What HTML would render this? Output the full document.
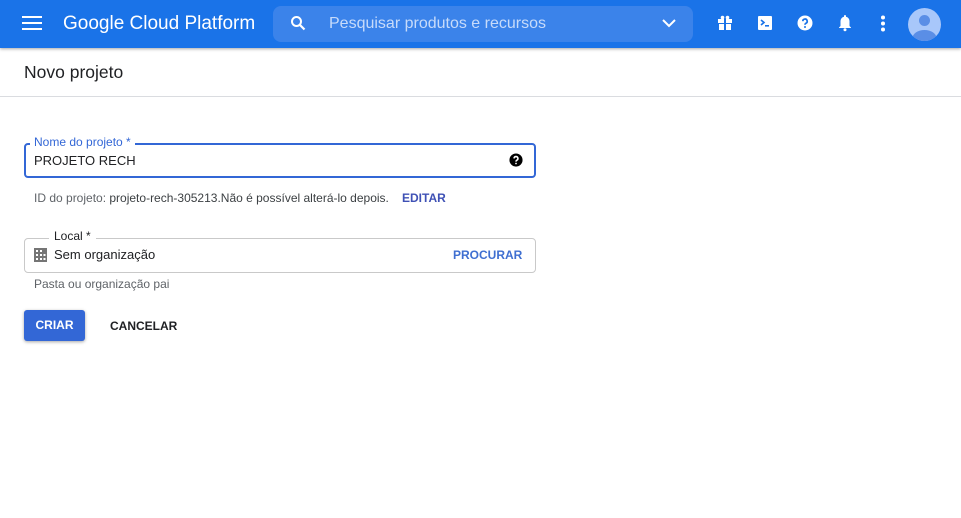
<!DOCTYPE html>
<html><head><meta charset="utf-8"><style>
*{box-sizing:border-box;margin:0;padding:0}
body{width:961px;height:518px;overflow:hidden;background:#fff;font-family:"Liberation Sans",Arial,sans-serif;position:relative}
.top{position:absolute;left:0;top:0;width:961px;height:48px;background:#1a73e8;box-shadow:0 1px 3px rgba(0,0,0,.35)}
.abs{position:absolute}
</style></head><body>
<div class="top">
  <svg class="abs" style="left:22px;top:15px" width="20" height="16"><rect y="1" width="20" height="2" fill="#fff"/><rect y="7" width="20" height="2" fill="#fff"/><rect y="13" width="20" height="2" fill="#fff"/></svg>
  <div class="abs" style="left:63px;top:13px;color:#fff;font-size:19px">Google Cloud Platform</div>
  <div class="abs" style="left:273px;top:6px;width:420px;height:36px;background:#3b83ea;border-radius:8px"></div>
  <svg class="abs" style="left:290px;top:15px" width="16" height="16" viewBox="0 0 16 16"><circle cx="6.5" cy="6.5" r="4.5" stroke="#fff" stroke-width="2" fill="none"/><path d="M10 10l4.5 4.5" stroke="#fff" stroke-width="2.2"/></svg>
  <div class="abs" style="left:329px;top:15px;color:#c7dbfa;font-size:16px">Pesquisar produtos e recursos</div>
  <svg class="abs" style="left:661px;top:17px" width="16" height="12"><path d="M2 3l6 6 6-6" stroke="#fff" stroke-width="2" fill="none"/></svg>
  <svg class="abs" style="left:717px;top:15px" width="16" height="16" viewBox="0 0 16 16" fill="#fff"><rect x="1" y="4" width="14" height="4"/><rect x="2" y="9" width="12" height="6"/><rect x="7" y="4" width="2" height="11" fill="#1a73e8"/><circle cx="5.5" cy="2.5" r="1.8"/><circle cx="10.5" cy="2.5" r="1.8"/></svg>
  <svg class="abs" style="left:757px;top:15px" width="16" height="16" viewBox="0 0 16 16"><rect x="1" y="1" width="14" height="14" rx="1" fill="#fff"/><path d="M4 5l3 2.5L4 10" stroke="#1a73e8" stroke-width="1.6" fill="none"/><rect x="8" y="10" width="4" height="1.6" fill="#1a73e8"/></svg>
  <svg class="abs" style="left:797px;top:15px" width="16" height="16" viewBox="0 0 16 16"><circle cx="8" cy="8" r="7.5" fill="#fff"/><path d="M5.8 6.2a2.2 2.2 0 1 1 3.2 2c-.8.4-1 .9-1 1.6" stroke="#1a73e8" stroke-width="1.7" fill="none"/><circle cx="8" cy="12" r="1" fill="#1a73e8"/></svg>
  <svg class="abs" style="left:838px;top:14px" width="14" height="18" viewBox="0 0 14 18" fill="#fff"><path d="M7 1a1 1 0 0 1 1 1v.7A4.5 4.5 0 0 1 11.5 7v5l1.5 1.5V14H1v-.5L2.5 12V7A4.5 4.5 0 0 1 6 2.7V2a1 1 0 0 1 1-1z"/><circle cx="7" cy="15.8" r="1.5"/></svg>
  <svg class="abs" style="left:880px;top:15px" width="6" height="18" fill="#fff"><circle cx="3" cy="2.5" r="2"/><circle cx="3" cy="8.5" r="2"/><circle cx="3" cy="14.5" r="2"/></svg>
  <svg class="abs" style="left:908px;top:8px" width="33" height="33" viewBox="0 0 33 33"><defs><clipPath id="c"><circle cx="16.5" cy="16.5" r="16.5"/></clipPath></defs><circle cx="16.5" cy="16.5" r="16.5" fill="#a8c7fa"/><g clip-path="url(#c)" fill="#5a8ee6"><circle cx="16.5" cy="12.5" r="5.5"/><ellipse cx="16.5" cy="30" rx="12" ry="8"/></g></svg>
</div>
<div class="abs" style="left:24px;top:62px;font-size:17.5px;color:#202124">Novo projeto</div>
<div class="abs" style="left:0;top:96px;width:961px;height:1px;background:#dadce0"></div>

<div class="abs" style="left:24px;top:143px;width:512px;height:35px;border:2.5px solid #3367d6;border-radius:4px"></div>
<div class="abs" style="left:30px;top:135px;background:#fff;padding:0 4px;font-size:12px;color:#3367d6">Nome do projeto *</div>
<div class="abs" style="left:34px;top:153px;font-size:13px;color:#202124">PROJETO RECH</div>
<svg class="abs" style="left:509px;top:153px" width="14" height="14" viewBox="0 0 16 16"><circle cx="8" cy="8" r="7.5" fill="#000"/><path d="M5.8 6.2a2.2 2.2 0 1 1 3.2 2c-.8.4-1 .9-1 1.6" stroke="#fff" stroke-width="1.8" fill="none"/><circle cx="8" cy="12" r="1" fill="#fff"/></svg>
<div class="abs" style="left:34px;top:191px;font-size:12px;color:#5f6368">ID do projeto: <span style="color:#3c4043">projeto-rech-305213.Não é possível alterá-lo depois.</span></div>
<div class="abs" style="left:402px;top:191px;font-size:12px;color:#3f51b5;font-weight:bold">EDITAR</div>

<div class="abs" style="left:24px;top:238px;width:512px;height:35px;border:1px solid #c9c9c9;border-radius:4px"></div>
<div class="abs" style="left:49px;top:229px;background:#fff;padding:0 5px;font-size:12px;color:#202124">Local *</div>
<svg class="abs" style="left:34px;top:248px" width="13" height="14" viewBox="0 0 13 14"><rect width="13" height="14" fill="#757575"/><g fill="#fff"><rect x="2" y="2" width="2" height="2"/><rect x="6" y="2" width="2" height="2"/><rect x="2" y="6" width="2" height="2"/><rect x="6" y="6" width="2" height="2"/><rect x="2" y="10" width="2" height="2"/><rect x="6" y="10" width="2" height="2"/><rect x="9.5" y="6" width="2" height="2"/><rect x="9.5" y="10" width="2" height="2"/></g></svg>
<div class="abs" style="left:54px;top:247px;font-size:13px;color:#202124">Sem organização</div>
<div class="abs" style="left:453px;top:248px;font-size:12px;color:#3f6fd1;font-weight:bold">PROCURAR</div>
<div class="abs" style="left:34px;top:277px;font-size:12px;color:#5f6368">Pasta ou organização pai</div>

<div class="abs" style="left:24px;top:310px;width:61px;height:31px;background:#3367d6;border-radius:3px;box-shadow:0 1px 3px rgba(0,0,0,.35);color:#fff;font-size:12px;font-weight:bold;text-align:center;line-height:31px">CRIAR</div>
<div class="abs" style="left:110px;top:319px;font-size:12px;font-weight:bold;color:#202124">CANCELAR</div>
</body></html>
